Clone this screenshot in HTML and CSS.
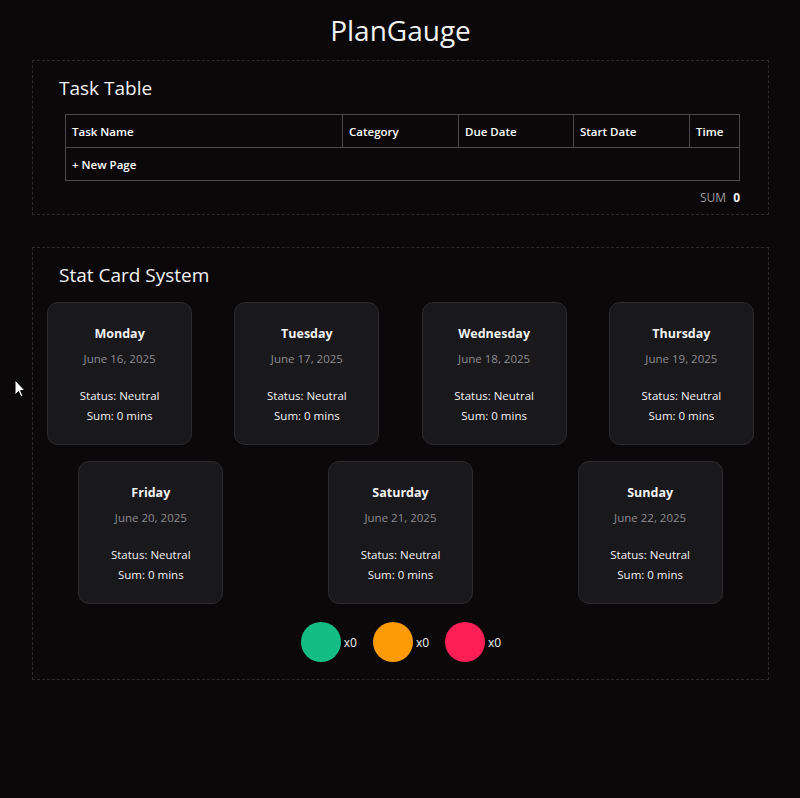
FILE: index.html
```html
<!DOCTYPE html>
<html>

<head>
    <title>PlanGauge</title>
    <link rel="stylesheet" href="styles.css">
</head>

<body>
    <h1 class="app-title">PlanGauge</h1>

    <section class="panel">
        <h2 class="panel-title">Task Table</h2>
        <table class="task-table">
            <thead>
                <tr>
                    <th class="col-name">Task Name</th>
                    <th class="col-cat">Category</th>
                    <th class="col-due">Due Date</th>
                    <th class="col-start">Start Date</th>
                    <th class="col-time">Time</th>
                </tr>
            </thead>
            <tbody>
                <tr>
                    <td colspan="5" class="new-page">+ New Page</td>
                </tr>
            </tbody>
        </table>
        <div class="sum-row">
            <span class="sum-label">SUM</span>
            <span class="sum-value">0</span>
        </div>
    </section>

    <section class="panel panel-stats">
        <h2 class="panel-title">Stat Card System</h2>
        <div class="card-grid">
            <div class="stat-card">
                <div class="day">Monday</div>
                <div class="date">June 16, 2025</div>
                <div class="status">Status: Neutral</div>
                <div class="sum">Sum: 0 mins</div>
            </div>
            <div class="stat-card">
                <div class="day">Tuesday</div>
                <div class="date">June 17, 2025</div>
                <div class="status">Status: Neutral</div>
                <div class="sum">Sum: 0 mins</div>
            </div>
            <div class="stat-card">
                <div class="day">Wednesday</div>
                <div class="date">June 18, 2025</div>
                <div class="status">Status: Neutral</div>
                <div class="sum">Sum: 0 mins</div>
            </div>
            <div class="stat-card">
                <div class="day">Thursday</div>
                <div class="date">June 19, 2025</div>
                <div class="status">Status: Neutral</div>
                <div class="sum">Sum: 0 mins</div>
            </div>
            <div class="stat-card">
                <div class="day">Friday</div>
                <div class="date">June 20, 2025</div>
                <div class="status">Status: Neutral</div>
                <div class="sum">Sum: 0 mins</div>
            </div>
            <div class="stat-card">
                <div class="day">Saturday</div>
                <div class="date">June 21, 2025</div>
                <div class="status">Status: Neutral</div>
                <div class="sum">Sum: 0 mins</div>
            </div>
            <div class="stat-card">
                <div class="day">Sunday</div>
                <div class="date">June 22, 2025</div>
                <div class="status">Status: Neutral</div>
                <div class="sum">Sum: 0 mins</div>
            </div>
        </div>

        <div class="counters">
            <div class="counter"><span class="dot dot-green"></span><span class="count">x0</span></div>
            <div class="counter"><span class="dot dot-orange"></span><span class="count">x0</span></div>
            <div class="counter"><span class="dot dot-red"></span><span class="count">x0</span></div>
        </div>
    </section>

    <!-- mouse pointer from the capture -->
    <svg class="pointer" width="12" height="19" viewBox="0 0 12 19">
        <path d="M1 1 L1 16 L4.5 12.5 L7 18 L9 17 L6.6 11.6 L11 11.6 Z" fill="#fff" stroke="#000" stroke-width="1"/>
    </svg>
</body>

</html>
```

FILE: styles.css
```css
body {
    background-color: #0a0809;
    color: #f2f2f2;
    font-family: 'Open Sans', 'Noto Sans', sans-serif;
    margin: 0;
    padding: 0 31px 40px 32px;
}

.app-title {
    text-align: center;
    font-size: 28px;
    font-weight: 400;
    margin: 0;
    padding-top: 12px;
    height: 48px;
    line-height: 36px;
}

.panel {
    border: 1px dashed #2b2a2c;
    padding: 14px 28px 8px 32px;
}

.panel-title {
    font-size: 19px;
    font-weight: 400;
    margin: 0 0 13px -6px;
    line-height: 26px;
}

.task-table {
    width: 100%;
    border-collapse: collapse;
    font-size: 11.5px;
    color: #fff;
}

.task-table th,
.task-table td {
    border: 1px solid #4a494b;
    text-align: left;
    font-weight: 600;
    padding: 0 6px;
    height: 32px;
}

.col-name { width: 264px; }
.col-cat { width: 103px; }
.col-due { width: 102px; }
.col-start { width: 103px; }

.sum-row {
    text-align: right;
    font-size: 12px;
    padding: 8px 0 0;
    height: 17px;
}

.sum-label {
    color: #9a9a9a;
    margin-right: 4px;
}

.sum-value {
    font-weight: 700;
}

.panel-stats {
    margin-top: 32px;
    padding: 14px 0 17px;
}

.panel-stats .panel-title {
    margin: 0 0 14px 26px;
}

.card-grid {
    display: flex;
    flex-wrap: wrap;
    justify-content: space-around;
    margin: 0 -7px;
    row-gap: 16px;
}

.stat-card {
    box-sizing: border-box;
    width: 145px;
    height: 143px;
    margin: 0 10px;
    background-color: #19181b;
    border: 1px solid #2b2a2e;
    border-radius: 11px;
    text-align: center;
    font-size: 11.5px;
    padding-top: 21px;
}

.stat-card .day {
    font-weight: 700;
    font-size: 12.5px;
    line-height: 20px;
}

.stat-card .date {
    color: #8d8c8f;
    line-height: 18px;
    margin-top: 6px;
    margin-bottom: 18px;
}

.stat-card .status,
.stat-card .sum {
    line-height: 20px;
}

.counters {
    display: flex;
    justify-content: center;
    gap: 16px;
    margin-top: 18px;
    padding-left: 1px;
}

.counter {
    display: flex;
    align-items: center;
    gap: 3px;
    font-size: 12px;
}

.dot {
    display: inline-block;
    width: 40px;
    height: 40px;
    border-radius: 50%;
}

.dot-green { background-color: #13bd84; }
.dot-orange { background-color: #fc9a07; }
.dot-red { background-color: #fb1f56; }

.pointer {
    position: absolute;
    left: 14px;
    top: 379px;
}
```
